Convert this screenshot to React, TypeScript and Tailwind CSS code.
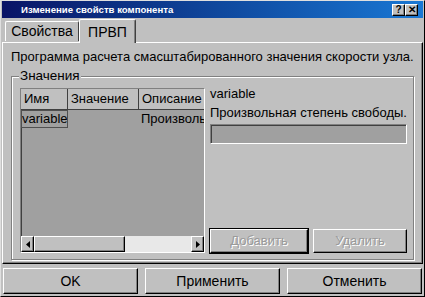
import React from 'react';

const raised =
  'border border-t-white border-l-white border-r-[#000] border-b-[#000] shadow-[inset_-1px_-1px_0_#808080]';
const sunken =
  'border border-t-[#808080] border-l-[#808080] border-r-white border-b-white shadow-[inset_1px_1px_0_#404040]';

const Arrow: React.FC<{ dir: 'left' | 'right' }> = ({ dir }) => (
  <svg width="4" height="7" viewBox="0 0 4 7">
    {dir === 'left' ? <path d="M4 0 L0 3.5 L4 7 Z" fill="#000" /> : <path d="M0 0 L4 3.5 L0 7 Z" fill="#000" />}
  </svg>
);

const App: React.FC = () => {
  return (
    <div className="w-[425px] h-[297px] bg-[#c0c0c0] overflow-hidden font-['Liberation_Sans',Arial,sans-serif] text-black border border-t-[#dfdfdf] border-l-[#dfdfdf] border-r-[#000] border-b-[#000]">
      {/* Title bar */}
      <div className="mx-[1px] h-[17px] flex items-center bg-gradient-to-r from-[#0a1466] to-[#1a78d4] pl-[19px] pr-[5px]">
        <span className="text-white font-bold text-[9.6px] leading-none flex-1">Изменение свойств компонента</span>
        <div className="flex">
          <div className={`${raised} bg-[#c0c0c0] w-[13px] h-[12px] flex items-center justify-center text-[10px] font-bold leading-none`}>?</div>
          <div className={`${raised} bg-[#c0c0c0] w-[13px] h-[12px] flex items-center justify-center text-[10px] font-bold leading-none`}>✕</div>
        </div>
      </div>

      {/* Tabs */}
      <div className="h-[24px] flex items-end pl-[4px] relative z-10">
        <div className="h-[20px] w-[74px] border border-b-0 border-t-white border-l-white border-r-[#404040] rounded-t-[2px] flex items-center justify-center text-[14px] mb-[1px]">
          Свойства
        </div>
        <div className="h-[24px] w-[57px] border border-b-0 border-t-white border-l-white border-r-[#404040] shadow-[inset_-1px_0_0_#808080] rounded-t-[2px] bg-[#c0c0c0] flex items-start justify-center pt-[2px] text-[14px] -mb-[1px]">
          ПРВП
        </div>
      </div>

      {/* Tab page */}
      <div className={`mx-[1px] h-[222px] ${raised} px-[8px] pt-[6px]`}>
        <div className="text-[13px] leading-[16px] whitespace-nowrap">
          Программа расчета смасштабированного значения скорости узла.
        </div>

        {/* Group box */}
        <div className="relative mt-[11px] h-[184px] border border-[#808080] shadow-[inset_1px_1px_0_white,1px_1px_0_white] flex gap-[5px] pl-[8px] pr-[6px] pt-[11px] pb-[6px]">
          <span className="absolute -top-[9px] left-[7px] bg-[#c0c0c0] px-[1px] text-[13.5px] leading-[16px]">Значения</span>

          {/* Table */}
          <div className={`w-[185px] h-full ${sunken} bg-[#a0a0a0] flex flex-col`}>
            <div className="flex h-[21px] bg-[#c0c0c0] text-[13px] shrink-0">
              <div className="w-[47px] border-r border-b border-[#404040] pl-[3px] flex items-center">Имя</div>
              <div className="w-[71px] border-r border-b border-[#404040] pl-[3px] flex items-center">Значение</div>
              <div className="flex-1 border-b border-[#404040] pl-[3px] flex items-center overflow-hidden whitespace-nowrap">Описание</div>
            </div>
            <div className="flex h-[18px] text-[13px] shrink-0">
              <div className="w-[47px] border border-[#505050] flex items-center overflow-hidden whitespace-nowrap">variable</div>
              <div className="w-[71px]" />
              <div className="flex-1 pl-[2px] flex items-center overflow-hidden whitespace-nowrap">Произволь</div>
            </div>
            <div className="flex-1" />
            {/* Horizontal scrollbar */}
            <div className="flex h-[16px] shrink-0 bg-[#e8e8e8]">
              <div className={`w-[13px] h-full ${raised} bg-[#c0c0c0] flex items-center justify-center`}>
                <Arrow dir="left" />
              </div>
              <div className={`w-[91px] h-full ${raised} bg-[#c0c0c0]`} />
              <div className="flex-1" />
              <div className={`w-[13px] h-full ${raised} bg-[#c0c0c0] flex items-center justify-center`}>
                <Arrow dir="right" />
              </div>
            </div>
          </div>

          {/* Details */}
          <div className="flex-1 flex flex-col text-[13px]">
            <div className="leading-[16px] -mt-[2px]">variable</div>
            <div className="leading-[16px] mt-[3px] whitespace-nowrap">Произвольная степень свободы.</div>
            <div className={`h-[20px] mt-[3px] ${sunken} bg-[#a0a0a0]`} />
            <div className="flex-1" />
            <div className="flex gap-[5px]">
              <button className={`w-[98px] h-[24px] ${raised} bg-[#c0c0c0] text-[#9a9a9a] [text-shadow:1px_1px_0_white] outline outline-1 outline-black`}>
                Добавить
              </button>
              <button className={`flex-1 h-[24px] ${raised} bg-[#c0c0c0] text-[#9a9a9a] [text-shadow:1px_1px_0_white]`}>
                Удалить
              </button>
            </div>
          </div>
        </div>
      </div>

      {/* Dialog buttons */}
      <div className="flex gap-[7px] px-[2px] mt-[4px] text-[14px]">
        <button className={`flex-1 h-[26px] ${raised} bg-[#c0c0c0]`}>OK</button>
        <button className={`flex-1 h-[26px] ${raised} bg-[#c0c0c0]`}>Применить</button>
        <button className={`flex-1 h-[26px] ${raised} bg-[#c0c0c0]`}>Отменить</button>
      </div>
    </div>
  );
};

export default App;
